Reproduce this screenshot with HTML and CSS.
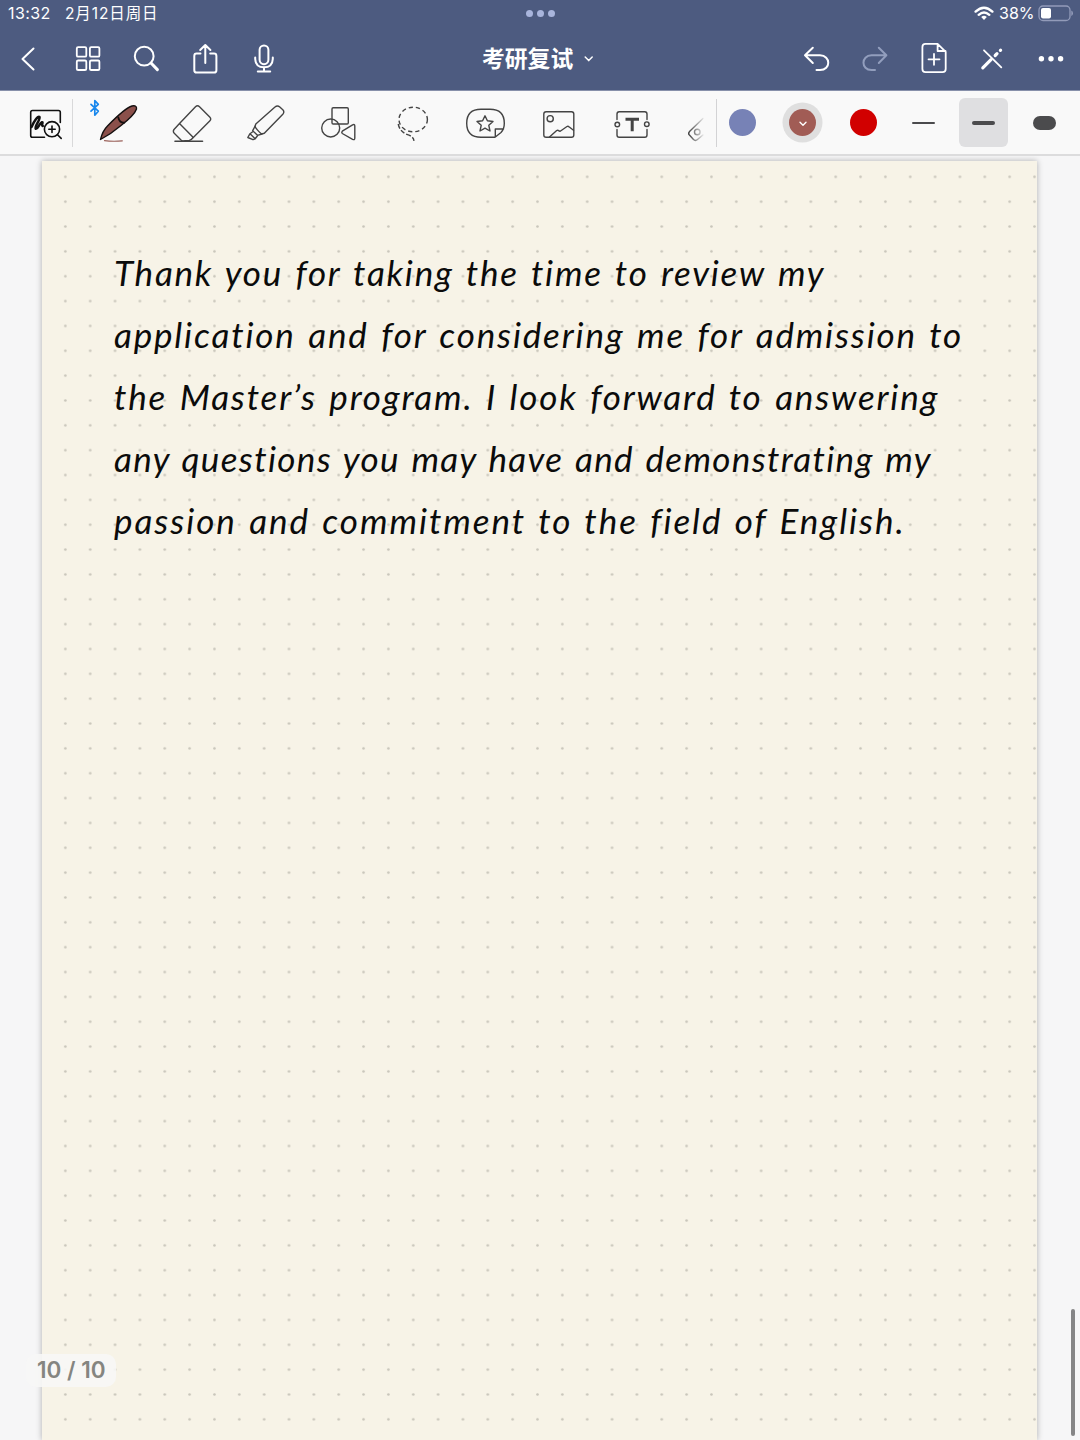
FILE: index.html
```html
<!DOCTYPE html>
<html lang="zh-CN">
<head>
    <meta charset="UTF-8">
    <meta name="viewport" content="width=device-width, initial-scale=1.0">
    <title>考研复试</title>
    <link rel="stylesheet" href="styles.css">
</head>
<body>
    <header>
        <div class="status-bar">
            <span class="time">13:32</span>
            <span class="date">2月12日周日</span>
            <span class="multitask"><i></i><i></i><i></i></span>
            <span class="status-right">
                <svg class="wifi" width="20" height="16" viewBox="974 5 20 16" fill="none" stroke="#fff" stroke-width="2.4">
                    <path d="M975.6 11.6Q984 3.8 992.4 11.6M978.7 14.8Q984 10 989.3 14.8"/>
                    <path d="M981.2 17.1Q984 14.6 986.8 17.1L984 20Z" fill="#fff" stroke="none"/>
                </svg>
                <span class="percent">38%</span>
                <svg class="battery" width="36" height="18" viewBox="1037 4 36 18">
                    <rect x="1039" y="6" width="31" height="14.5" rx="4" fill="none" stroke="#929bb9" stroke-width="1.3"/>
                    <rect x="1041" y="8" width="10" height="10.5" rx="2" fill="#fff"/>
                    <path d="M1071.3 10.5Q1073 11 1073 13.3T1071.3 16Z" fill="#929bb9"/>
                </svg>
            </span>
        </div>

        <nav class="nav-bar">
            <div class="nav-left">
                <svg viewBox="8 39 40 40"><path d="M33.5 48.5L22.5 59L33.5 69.5"/></svg>
                <svg viewBox="67 39 40 40" stroke-width="1.8">
                    <rect x="76.8" y="47.2" width="9.5" height="9.5" rx="1.3"/>
                    <rect x="89.9" y="47.2" width="9.5" height="9.5" rx="1.3"/>
                    <rect x="76.8" y="60.5" width="9.5" height="9.5" rx="1.3"/>
                    <rect x="89.9" y="60.5" width="9.5" height="9.5" rx="1.3"/>
                </svg>
                <svg viewBox="126 39 40 40">
                    <circle cx="144.2" cy="56.2" r="9.4"/>
                    <path d="M151 63L157.4 69.6" stroke-width="3"/>
                </svg>
                <svg viewBox="185 39 40 40">
                    <path d="M200.5 53.6H196.5Q194.3 53.6 194.3 56V70.2Q194.3 72.6 196.7 72.6H214Q216.4 72.6 216.4 70.2V56Q216.4 53.6 214 53.6H210.2M205.3 63V45.4M200.2 50L205.3 45L210.4 50"/>
                </svg>
                <svg viewBox="244 39 40 40">
                    <rect x="259.6" y="45.4" width="8.8" height="18.8" rx="4.4"/>
                    <path d="M255.2 57.5V59Q255.6 67.3 264 67.3T272.8 59V57.5M264 67.3V71.2M257.8 71.4H270.2"/>
                </svg>
            </div>
            <div class="nav-title">
                <span>考研复试</span>
                <svg viewBox="583 53 12 12"><path d="M585.2 57L588.7 60.6L592.2 57"/></svg>
            </div>
            <div class="nav-right">
                <svg viewBox="797 39 40 40"><path d="M812.8 47.8L805 55.3L812.8 63M805.5 55.3H820C831 55.5 831 70 820 70H816.5"/></svg>
                <svg viewBox="856 39 40 40" class="disabled"><path d="M878.8 47.8L886.4 55.3L878.8 63M886 55.3H871.5C860.8 55.5 860.8 70 871.5 70H875"/></svg>
                <svg viewBox="914 39 40 40" stroke-width="1.8">
                    <path d="M937.6 43.9H925.5Q922.4 43.9 922.4 47V69Q922.4 72.1 925.5 72.1H942.5Q945.7 72.1 945.7 69V51.8ZM937.6 44V51H945.5M934 53.9V64.8M928.5 59.3H939.5"/>
                </svg>
                <svg viewBox="973 39 40 40">
                    <path d="M984 50.3L1001.3 67.3" stroke-width="1.8"/>
                    <path d="M982.8 67.8L991 59.7M995.2 55.5L997 53.7M1000.4 50.4L1000.6 50.2" stroke-width="3.2"/>
                </svg>
                <svg viewBox="1031 39 40 40">
                    <g fill="#fff" stroke="none"><circle cx="1041.4" cy="58.8" r="2.7"/><circle cx="1051" cy="58.8" r="2.7"/><circle cx="1060.6" cy="58.8" r="2.7"/></g>
                </svg>
            </div>
        </nav>
    </header>

    <div class="toolbar">
        <div class="zoom-tool">
            <svg viewBox="25 103 40 40" stroke="#111" stroke-width="1.6">
                <path d="M44.5 137.3H32.5Q30.7 137.3 30.7 135.5V112.3Q30.7 110.5 32.5 110.5H58.5Q60.3 110.5 60.3 112.3V122.5"/>
                <path d="M31.5 127C34 121 38 115.5 39.5 117C41 119 33.5 127.5 35.8 128.8C38 129.3 39 123.5 42 122.2C43.5 122 41 125.5 42.8 126" stroke-width="2.5"/>
                <circle cx="52" cy="129.2" r="7.6" fill="#f9f9f9"/>
                <path d="M57.5 134.7L61.2 138.4M52 126V132.4M48.8 129.2H55.2"/>
            </svg>
        </div>
        <div class="tools">
            <div class="tool">
                <svg viewBox="98 103 40 40" stroke="#151010" stroke-width="1.4">
                    <path d="M100.5 139.5Q102.5 131 107.5 126Q125 108 132 106Q137 105 136.5 109Q134.5 115 121 125.5Q111 134 100.5 139.5Z" fill="#8b504b"/>
                    <path d="M118.3 117.5Q119.5 123 124.3 122.7" stroke-width="1.8"/>
                    <path d="M104.5 140.6Q113 141.8 122.3 140.8" stroke="#9b625b" stroke-width="1.2"/>
                </svg>
                <svg class="bluetooth" viewBox="88 98 14 20"><path d="M91 104.3L98.3 111.2L94.8 115.2V100.5L98.3 104.3L91 111.2" stroke="#1887ed" stroke-width="1.7"/></svg>
            </div>
            <div class="tool">
                <svg viewBox="172 103 40 40">
                    <path d="M179.5 123.5L195.5 106.7Q197.5 104.7 199.5 106.7L209.7 117Q211.7 119 209.7 121L193.3 137.5ZM179.5 123.5L174 129.5Q172.5 131.5 174.5 133.5L181 140Q182.8 141.6 185 140.7L188.8 140.7Q191 140.3 193.3 137.5"/>
                    <path d="M175 141.3H202.5" stroke-width="1.6"/>
                </svg>
            </div>
            <div class="tool">
                <svg viewBox="245 103 40 40">
                    <path d="M255.8 124L275 107Q277.4 104.8 279.8 107L282.8 109.8Q284.8 112 282.8 114.3L264.3 133.3L261.5 134Q256.5 129.5 255 126.5Z"/>
                    <path d="M255.2 126L252.7 130.7L257.5 135.3L262 134M252.7 131.7L250 133.7L255.2 138.8L257.5 135.8M250 133.7L247.8 137.5L253 139.7L255.2 138.8"/>
                </svg>
            </div>
            <div class="tool">
                <svg viewBox="318 103 40 40">
                    <circle cx="330.7" cy="128" r="9"/>
                    <rect x="332" y="107.7" width="16.3" height="16.3" rx="1.2"/>
                    <path d="M342.3 131.2L352.6 124.8Q354.8 123.8 354.8 126V138Q354.8 140.4 352.6 139.3L342.3 133.5Q341.2 132.3 342.3 131.2Z"/>
                </svg>
            </div>
            <div class="tool">
                <svg viewBox="392 103 40 40">
                    <ellipse cx="413.2" cy="119.5" rx="14.2" ry="12.3" stroke-dasharray="4.2 3" stroke-linecap="butt"/>
                    <path d="M398.2 124Q400 132.5 409 135.2Q413.5 137 414 140.8" stroke-dasharray="4.7 2" stroke-linecap="butt"/>
                </svg>
            </div>
            <div class="tool">
                <svg viewBox="465 103 40 40">
                    <path d="M495 137.2H481Q466.7 137.2 466.7 123.2T481 109.2H490Q504.3 109.2 504.3 123.2Q504.3 129 501 132.5ZM495.3 137V129H503.5"/>
                    <path d="M485 115.8L487.4 120.8L493 121.5L488.8 125.3L490 131L485 128.2L480 131L481.2 125.3L477 121.5L482.6 120.8Z"/>
                </svg>
            </div>
            <div class="tool">
                <svg viewBox="539 103 40 40">
                    <rect x="543.8" y="111.7" width="30" height="25.6" rx="2.3"/>
                    <circle cx="550.2" cy="118.7" r="3.1"/>
                    <path d="M549.5 137L556.7 130.5Q557.8 129.8 559.2 131L560.2 131.3L567 126.5Q568 125.9 569.3 127L573.5 130.3"/>
                </svg>
            </div>
            <div class="tool">
                <svg viewBox="612 103 40 40">
                    <path d="M617 119.5V114Q617 111.8 619.2 111.8H644.8Q647 111.8 647 114V119.5M617 129.5V135Q617 137.3 619.2 137.3H644.8Q647 137.3 647 135V129.5"/>
                    <circle cx="617.3" cy="124.5" r="2.3"/><circle cx="646.8" cy="124.2" r="2.3"/>
                    <path d="M625.5 119.2H639M632.2 119.2V131.2" stroke-width="3" stroke-linecap="butt"/>
                </svg>
            </div>
            <div class="tool partial">
                <svg viewBox="685 103 20 40">
                    <path d="M703 118.5L690 131Q688 133 689 134.5L693.5 139.5Q695.5 141.3 697.5 139.5L703 135"/>
                    <circle cx="697.3" cy="132" r="2.8"/>
                </svg>
            </div>
        </div>
        <div class="presets">
            <div class="preset"><span class="color blue"></span></div>
            <div class="preset">
                <span class="color brown">
                    <svg viewBox="0 0 8 6"><path d="M1 1.3L4 4.3L7 1.3" stroke="#fff" stroke-width="1.4"/></svg>
                </span>
            </div>
            <div class="preset"><span class="color red"></span></div>
            <div class="preset"><span class="stroke thin"></span></div>
            <div class="preset selected"><span class="stroke medium"></span></div>
            <div class="preset"><span class="stroke thick"></span></div>
        </div>
    </div>

    <main>
        <div class="paper">
            <svg class="dots" width="995" height="1280">
                <pattern id="dot-grid" x="10.95" y="3.4" width="24.85" height="24.85" patternUnits="userSpaceOnUse">
                    <circle cx="12.4" cy="12.4" r="1.3" fill="#c8c5ba"/>
                </pattern>
                <rect width="995" height="1280" fill="url(#dot-grid)"/>
            </svg>
            <p class="note">
                <span class="line line-1">Thank you for taking the time to review my</span>
                <span class="line line-2">application and for considering me for admission to</span>
                <span class="line line-3">the Master’s program. I look forward to answering</span>
                <span class="line line-4">any questions you may have and demonstrating my</span>
                <span class="line line-5">passion and commitment to the field of English.</span>
            </p>
        </div>
        <div class="page-number">10 / 10</div>
        <div class="scrollbar"></div>
    </main>
</body>
</html>
```

FILE: styles.css
```css
* {
    box-sizing: border-box;
}

body {
    margin: 0;
    width: 1080px;
    height: 1440px;
    overflow: hidden;
    display: flex;
    flex-direction: column;
    background-color: #f6f6f7;
    font-family: Inter, "Noto Sans CJK SC", sans-serif;
}

svg {
    display: block;
    flex: none;
    fill: none;
    stroke-linecap: round;
    stroke-linejoin: round;
}

header {
    height: 91px;
    background-color: #4d5b80;
    border-bottom: 1px solid #8790aa;
    color: white;
}

/* status bar */
.status-bar {
    display: flex;
    align-items: center;
    height: 27px;
    padding-left: 8px;
    font-size: 16px;
    line-height: 22px;
    position: relative;
}

.time {
    width: 57px;
    letter-spacing: 0.4px;
    margin-top: -2px;
}

.date {
    font-size: 15.5px;
    letter-spacing: 0.9px;
}

.multitask {
    position: absolute;
    left: 526px;
    top: 10px;
    display: flex;
    gap: 4px;
}

.multitask i {
    width: 7px;
    height: 7px;
    border-radius: 50%;
    background-color: #a9b5dc;
}

.status-right {
    display: flex;
    align-items: center;
    margin-left: auto;
    padding-right: 7px;
}

.wifi {
    margin-top: -1px;
}

.percent {
    width: 38px;
    margin: -2px 0 0 5px;
}

.battery {
    margin-top: -2px;
}

/* navigation */
.nav-bar {
    display: flex;
    align-items: center;
    height: 64px;
    position: relative;
}

.nav-bar svg {
    width: 40px;
    height: 40px;
    stroke: #fff;
}

.nav-bar svg:not([stroke-width]) {
    stroke-width: 2;
}

.nav-left {
    display: flex;
    gap: 19px;
    padding-left: 8px;
}

.nav-right {
    display: flex;
    gap: 18.5px;
    margin-left: auto;
    padding-right: 9px;
}

.nav-title {
    display: flex;
    align-items: center;
    gap: 10px;
    margin-left: 198px;
    font-size: 22.8px;
    font-weight: 600;
    line-height: 40px;
}

.nav-bar .nav-title svg {
    width: 12px;
    height: 12px;
    stroke-width: 1.5;
}

.nav-bar .disabled {
    stroke: #929ebd;
}

/* toolbar */
.toolbar {
    display: flex;
    height: 65px;
    background-color: #f9f9f9;
    border-bottom: 2px solid #dcdcdd;
    position: relative;
    z-index: 1;
}

.zoom-tool {
    width: 73px;
    height: 48px;
    margin-top: 8px;
    padding: 4px 0 0 25px;
    border-right: 1px solid #d9d9da;
}

.toolbar svg {
    width: 40px;
    height: 40px;
}

.tools {
    display: flex;
    width: 644px;
    height: 48px;
    margin-top: 8px;
    padding-left: 9px;
    overflow: hidden;
    border-right: 1px solid #d3d3d5;
}

.tool {
    flex: none;
    width: 73.4px;
    padding: 4px 0 0 16.3px;
    stroke: #444;
    stroke-width: 1.4;
    position: relative;
}

.toolbar .bluetooth {
    position: absolute;
    left: 6px;
    top: -1px;
    width: 14px;
    height: 20px;
}

.partial {
    width: 36px;
    -webkit-mask-image: linear-gradient(to right, #000 20px, transparent 36px);
    mask-image: linear-gradient(to right, #000 20px, transparent 36px);
}

.toolbar .partial svg {
    width: 20px;
}

.presets {
    display: flex;
    flex: none;
    align-items: center;
    height: 63px;
    margin-left: -4.5px;
}

.preset {
    display: flex;
    align-items: center;
    justify-content: center;
    width: 49px;
    height: 49px;
    margin: 0 5.65px;
    border-radius: 6px;
}

.selected {
    background-color: #dfdfe1;
}

.color {
    width: 27px;
    height: 27px;
    border-radius: 50%;
}

.blue {
    background-color: #7782b6;
}

.brown {
    display: flex;
    align-items: center;
    justify-content: center;
    background-color: #a15c55;
    box-shadow: 0 0 0 6.5px #dfdfdf;
}

.toolbar .brown svg {
    width: 8px;
    height: 6px;
    margin-top: 3px;
}

.red {
    background-color: #d10000;
}

.stroke {
    width: 23px;
    border-radius: 10px;
    background-color: #4b4b4d;
}

.thin {
    height: 2px;
}

.medium {
    height: 4px;
}

.thick {
    height: 14px;
}

/* page */
main {
    flex: 1;
    padding: 5px 0 0 42px;
    position: relative;
}

.paper {
    width: 995px;
    height: 1279px;
    background-color: #f7f3e7;
    box-shadow: 0 0 6px rgba(0, 0, 0, 0.3);
    position: relative;
}

.dots {
    position: absolute;
    left: 0;
    top: 0;
}

.note {
    margin: 0;
    padding: 79.5px 0 0 72px;
    font-family: Lato, sans-serif;
    font-style: italic;
    font-size: 35px;
    line-height: 62px;
    letter-spacing: 1.7px;
    word-spacing: 2.5px;
    color: #0b0b0b;
    position: relative;
}

.line {
    display: block;
    width: max-content;
    white-space: nowrap;
}

.line-1 {
    letter-spacing: 1.75px;
}

.line-2 {
    letter-spacing: 1.83px;
}

.line-3 {
    letter-spacing: 1.83px;
}

.line-4 {
    letter-spacing: 1.35px;
    word-spacing: 2px;
}

.line-5 {
    letter-spacing: 1.95px;
    word-spacing: 2.2px;
}

.page-number {
    position: absolute;
    left: 26px;
    top: 1198px;
    width: 90px;
    height: 33px;
    padding-left: 11px;
    border-radius: 10px;
    background-color: rgba(247, 247, 246, 0.9);
    font-size: 22.5px;
    font-weight: 600;
    line-height: 32px;
    color: #858580;
}

.scrollbar {
    position: absolute;
    right: 5px;
    top: 1153px;
    width: 4px;
    height: 127px;
    border-radius: 2px;
    background-color: #858586;
}
```
